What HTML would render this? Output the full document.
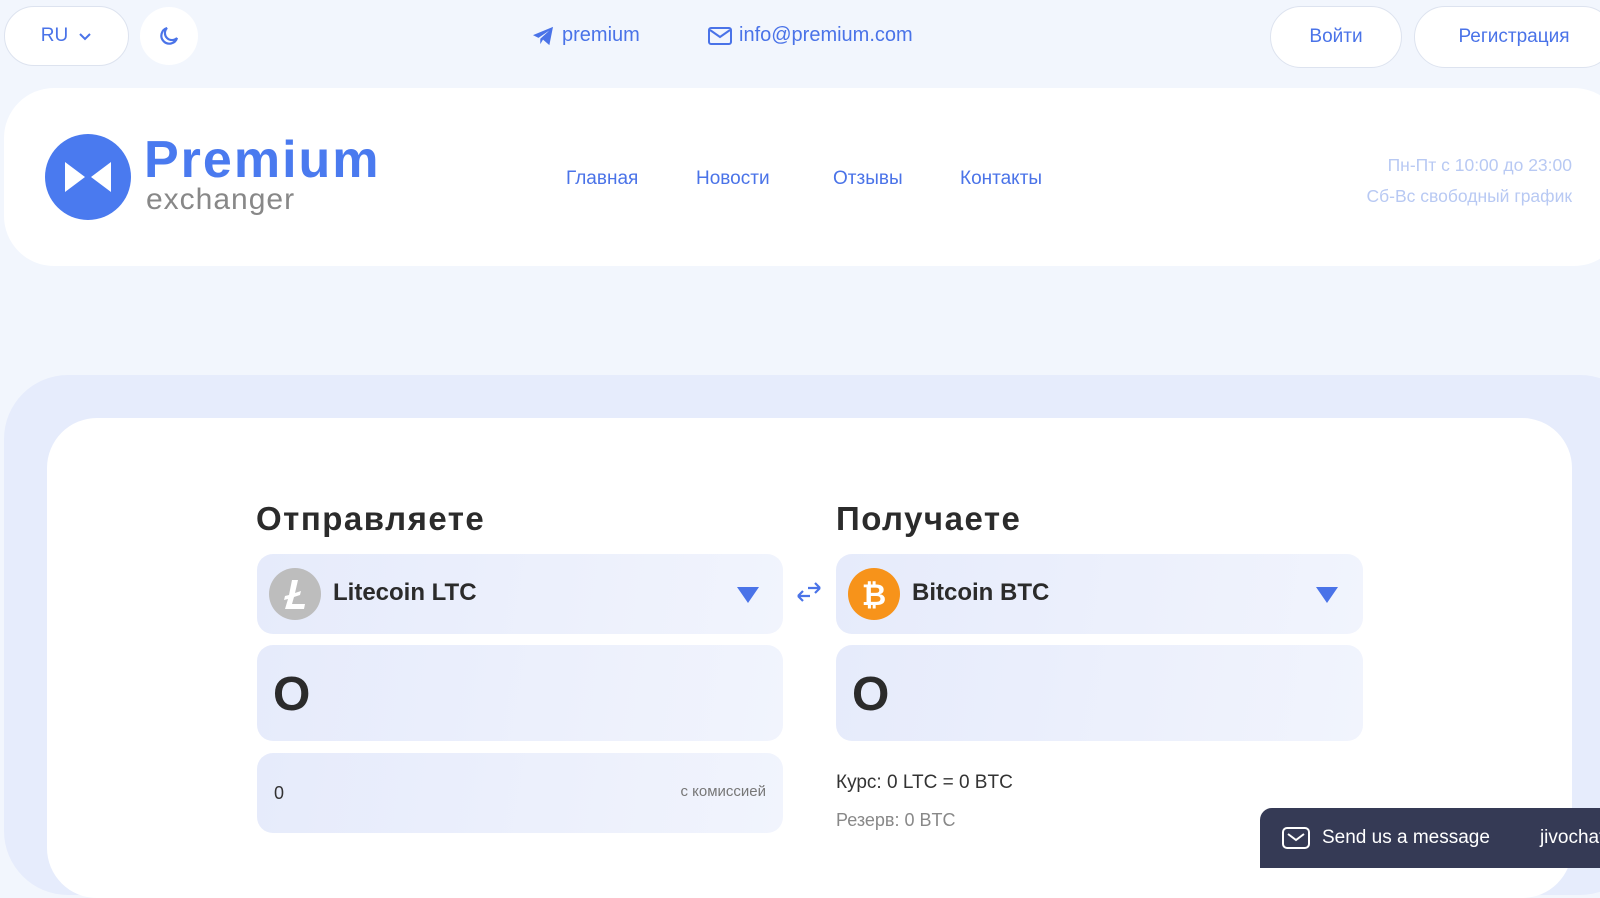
<!DOCTYPE html><html><head><meta charset="utf-8"><style>
*{box-sizing:border-box;margin:0;padding:0}
body{width:1600px;height:856px;overflow:hidden;background:#f2f6fd;font-family:"Liberation Sans",sans-serif;position:relative}
.pill{position:absolute;background:#fff;border:1px solid #dde3ef;border-radius:32px;color:#4a73e8;font-size:19px;display:flex;align-items:center;justify-content:center}
.a{position:absolute}
.blue{color:#4a73e8}
.box{position:absolute;background:linear-gradient(100deg,#e6ebfb,#f1f4fd);border-radius:16px}
.h{position:absolute;font-size:33px;font-weight:bold;color:#2b2b2b;letter-spacing:1.5px}
.name{font-size:24px;font-weight:bold;color:#2b2b2b;position:absolute;top:25px}
.tri{position:absolute;width:0;height:0;border-left:11px solid transparent;border-right:11px solid transparent;border-top:16px solid #4a73e8;top:33px}
.zero{position:absolute;left:16px;top:22px;font-size:48px;font-weight:bold;color:#2b2b2b}
</style></head><body>
<div class="pill" style="left:4px;top:6px;width:125px;height:60px">RU <svg width="14" height="10" style="margin-left:10px" viewBox="0 0 14 10"><path d="M2 3l5 5 5-5" stroke="#4a73e8" stroke-width="2" fill="none"/></svg></div>
<div class="pill" style="left:140px;top:7px;width:58px;height:58px;border:none"><svg width="24" height="24" viewBox="0 0 24 24"><path d="M20 14A8 8 0 1 1 10 4a6.5 6.5 0 0 0 10 10z" stroke="#4a73e8" stroke-width="2.2" fill="none"/></svg></div>
<div class="a blue" style="left:532px;top:24px;font-size:20px;display:flex;align-items:center"><svg width="22" height="20" viewBox="0 0 24 22" style="margin-right:8px"><path d="M1 10L23 1 19 21 12 15 9 20 9 14 19 5 7 13z" fill="#4a73e8"/></svg>premium</div>
<div class="a blue" style="left:708px;top:24px;font-size:20px;display:flex;align-items:center"><svg width="24" height="18" viewBox="0 0 24 18" style="margin-right:7px"><rect x="1" y="1" width="22" height="16" rx="2" stroke="#4a73e8" stroke-width="2" fill="none"/><path d="M2 3l10 7 10-7" stroke="#4a73e8" stroke-width="2" fill="none"/></svg>info@premium.com</div>
<div class="pill" style="left:1270px;top:6px;width:132px;height:62px">Войти</div>
<div class="pill" style="left:1414px;top:6px;width:200px;height:62px">Регистрация</div>
<div class="a" style="left:4px;top:88px;width:1620px;height:178px;background:#fff;border-radius:50px"></div>
<svg class="a" style="left:45px;top:134px" width="86" height="86" viewBox="0 0 86 86"><circle cx="43" cy="43" r="43" fill="#4a7aef"/><path d="M20 28L40 43 20 58z M66 28L46 43 66 58z" fill="#fff"/></svg>
<div class="a" style="left:144px;top:134px;font-size:52px;font-weight:bold;color:#4a7aef;line-height:52px;letter-spacing:2px">Premium</div>
<div class="a" style="left:146px;top:184px;font-size:30px;color:#888;line-height:32px;letter-spacing:1px">exchanger</div>
<div class="a blue" style="left:566px;top:168px;font-size:19px">Главная</div>
<div class="a blue" style="left:696px;top:168px;font-size:19px">Новости</div>
<div class="a blue" style="left:833px;top:168px;font-size:19px">Отзывы</div>
<div class="a blue" style="left:960px;top:168px;font-size:19px">Контакты</div>
<div class="a" style="right:28px;top:150px;font-size:17.5px;color:#b8c9f3;text-align:right;line-height:31px">Пн-Пт с 10:00 до 23:00<br>Сб-Вс свободный график</div>
<div class="a" style="left:4px;top:375px;width:1640px;height:520px;background:#e6ecfc;border-radius:64px"></div>
<div class="a" style="left:47px;top:418px;width:1525px;height:480px;background:#fff;border-radius:50px"></div>
<div class="h" style="left:256px;top:500px">Отправляете</div>
<div class="h" style="left:836px;top:500px">Получаете</div>
<div class="box" style="left:257px;top:554px;width:526px;height:80px">
<svg class="a" style="left:12px;top:14px" width="52" height="52" viewBox="0 0 52 52"><circle cx="26" cy="26" r="26" fill="#bdbdbd"/><path d="M23 12h6l-3 13 6-2-1 4-6 2-2 7h13l-1 5H16l3-10-4 1 1-4 4-1z" fill="#fff"/></svg>
<div class="name" style="left:76px">Litecoin LTC</div><div class="tri" style="left:480px"></div></div>
<svg class="a" style="left:795px;top:580px" width="28" height="24" viewBox="0 0 28 24"><path d="M3 16h12M3 16l5-5M3 16l5 5M25 8H13M25 8l-5-5M25 8l-5 5" stroke="#4a73e8" stroke-width="2.2" fill="none"/></svg>
<div class="box" style="left:836px;top:554px;width:527px;height:80px">
<svg class="a" style="left:12px;top:14px" width="52" height="52" viewBox="0 0 52 52"><circle cx="26" cy="26" r="26" fill="#f7931a"/><text x="26" y="37" font-size="30" font-weight="bold" fill="#fff" text-anchor="middle" font-family="Liberation Sans">₿</text></svg>
<div class="name" style="left:76px">Bitcoin BTC</div><div class="tri" style="left:480px"></div></div>
<div class="box" style="left:257px;top:645px;width:526px;height:96px"><div class="zero">O</div></div>
<div class="box" style="left:836px;top:645px;width:527px;height:96px"><div class="zero">O</div></div>
<div class="box" style="left:257px;top:753px;width:526px;height:80px"><div class="a" style="left:17px;top:30px;font-size:18px;color:#333">0</div><div class="a" style="right:17px;top:30px;font-size:15px;color:#777">с комиссией</div></div>
<div class="a" style="left:836px;top:772px;font-size:19px;color:#333">Курс: 0 LTC = 0 BTC</div>
<div class="a" style="left:836px;top:810px;font-size:18px;color:#888">Резерв: 0 BTC</div>
<div class="a" style="left:1260px;top:808px;width:360px;height:60px;background:#353a55;border-radius:12px 0 0 0;color:#fff;font-size:19px;display:flex;align-items:center;padding-left:22px;white-space:nowrap;overflow:hidden">
<svg width="28" height="22" viewBox="0 0 28 22" style="margin-right:12px"><rect x="1" y="1" width="26" height="20" rx="4" stroke="#fff" stroke-width="2" fill="none"/><path d="M6 7l8 6 8-6" stroke="#fff" stroke-width="2" fill="none"/></svg>Send us a message<span style="margin-left:50px">jivochat</span></div>
</body></html>
